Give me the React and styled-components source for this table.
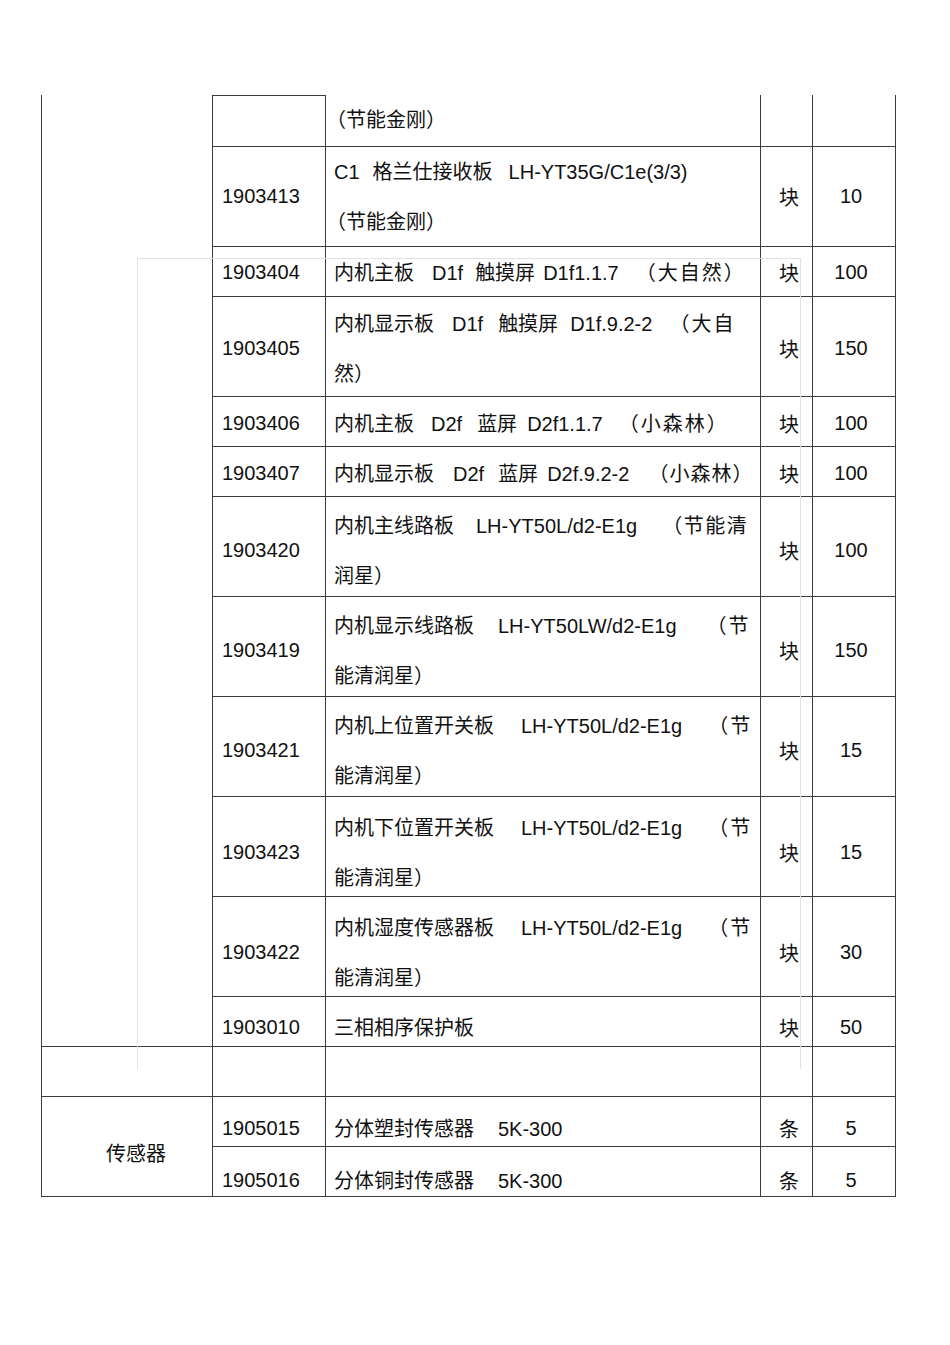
import React from 'react';
import styled, { createGlobalStyle } from 'styled-components';

const GlobalStyle = createGlobalStyle`
  html, body {
    margin: 0;
    padding: 0;
    background: #ffffff;
  }
  body {
    font-family: "Liberation Sans", "Noto Sans CJK SC", sans-serif;
    color: #111111;
  }
`;

const Page = styled.div`
  position: relative;
  width: 950px;
  height: 1345px;
  padding-top: 95px;
  box-sizing: border-box;
`;

const Sheet = styled.div`
  display: grid;
  grid-template-columns: 171px 113px 435px 52px 83px;
  grid-template-rows: 52px;
  grid-auto-rows: 50px;
  margin-left: 41px;
  width: 855px;
  border-left: 1px solid #3c3c3c;
  box-sizing: border-box;
`;

const Cell = styled.div`
  grid-column: ${({ $col }) => $col};
  grid-row: ${({ $row, $span }) => `${$row} / span ${$span || 1}`};
  border-right: 1px solid #3c3c3c;
  border-bottom: 1px solid #3c3c3c;
  border-top: ${({ $top }) => ($top ? '1px solid #3c3c3c' : 'none')};
  box-sizing: border-box;
  font-size: 20px;
  white-space: nowrap;
`;

const GroupCell = styled(Cell)`
  display: flex;
  align-items: center;
  justify-content: center;
  padding: 12px 0 0 18px;
`;

/* centred cells: padding-top of 2*shift moves the text down by shift */
const CodeCell = styled(Cell)`
  display: flex;
  align-items: center;
  padding: ${({ $shift = 0 }) => 2 * $shift}px 0 0 9px;
`;

const DescCell = styled(Cell)`
  padding: ${({ $shift = 0 }) => $shift}px 0 0 8px;
`;

const Line = styled.div`
  height: 50px;
  line-height: 50px;
`;

const Gap = styled.span`
  display: inline-block;
  width: ${({ $w }) => ($w > 0 ? $w : 0)}px;
  margin-left: ${({ $w }) => ($w < 0 ? $w : 0)}px;
`;

const Word = styled.span`
  letter-spacing: ${({ $ls }) => $ls || 0}px;
`;

const UnitCell = styled(Cell)`
  display: flex;
  align-items: center;
  justify-content: center;
  padding: ${({ $shift = 0 }) => 2 * $shift}px 0 0 5px;
`;

const QtyCell = styled(Cell)`
  display: flex;
  align-items: center;
  justify-content: center;
  padding: ${({ $shift = 0 }) => 2 * $shift}px 6px 0 0;
`;

const Watermark = styled.div`
  position: absolute;
  left: 137px;
  top: 258px;
  width: 662px;
  height: 810px;
  border: 1px solid #e2e2e2;
  border-bottom: none;
  pointer-events: none;
`;

const rows = [
  { code: '', lines: [[-8, '（节能金刚）']], unit: '', qty: '', top: true, shift: 0 },
  {
    code: '1903413',
    lines: [['C1', 13, '格兰仕接收板', 16, 'LH-YT35G/C1e(3/3)'], [-8, '（节能金刚）']],
    unit: '块',
    qty: '10',
    shift: 0,
  },
  {
    code: '1903404',
    lines: [['内机主板', 18, 'D1f', 12, '触摸屏', 8, 'D1f1.1.7', 17, { t: '（大自然）', ls: 2 }]],
    unit: '块',
    qty: '100',
    shift: 1,
  },
  {
    code: '1903405',
    lines: [['内机显示板', 18, 'D1f', 15, '触摸屏', 12, 'D1f.9.2-2', 17, { t: '（大自', ls: 2 }], ['然）']],
    unit: '块',
    qty: '150',
    shift: 2,
  },
  {
    code: '1903406',
    lines: [['内机主板', 17, 'D2f', 15, '蓝屏', 10, 'D2f1.1.7', 16, { t: '（小森林）', ls: 2 }]],
    unit: '块',
    qty: '100',
    shift: 2,
  },
  {
    code: '1903407',
    lines: [['内机显示板', 19, 'D2f', 14, '蓝屏', 9, 'D2f.9.2-2', 19, { t: '（小森林）', ls: 1 }]],
    unit: '块',
    qty: '100',
    shift: 2,
  },
  {
    code: '1903420',
    lines: [['内机主线路板', 22, 'LH-YT50L/d2-E1g', 25, { t: '（节能清', ls: 1.5 }], ['润星）']],
    unit: '块',
    qty: '100',
    shift: 4,
  },
  {
    code: '1903419',
    lines: [['内机显示线路板', 24, 'LH-YT50LW/d2-E1g', 30, { t: '（节', ls: 2 }], ['能清润星）']],
    unit: '块',
    qty: '150',
    shift: 4,
  },
  {
    code: '1903421',
    lines: [['内机上位置开关板', 27, 'LH-YT50L/d2-E1g', 26, { t: '（节', ls: 2 }], ['能清润星）']],
    unit: '块',
    qty: '15',
    shift: 4,
  },
  {
    code: '1903423',
    lines: [['内机下位置开关板', 27, 'LH-YT50L/d2-E1g', 26, { t: '（节', ls: 2 }], ['能清润星）']],
    unit: '块',
    qty: '15',
    shift: 6,
  },
  {
    code: '1903422',
    lines: [['内机湿度传感器板', 27, 'LH-YT50L/d2-E1g', 26, { t: '（节', ls: 2 }], ['能清润星）']],
    unit: '块',
    qty: '30',
    shift: 6,
  },
  { code: '1903010', lines: [['三相相序保护板']], unit: '块', qty: '50', shift: 6 },
  { code: '', lines: [], unit: '', qty: '', group: '', shift: 0 },
  { code: '1905015', lines: [['分体塑封传感器', 24, '5K-300']], unit: '条', qty: '5', group: '传感器', shift: 7 },
  { code: '1905016', lines: [['分体铜封传感器', 24, '5K-300']], unit: '条', qty: '5', shift: 9 },
];

const renderPart = (p, j) => {
  if (typeof p === 'number') return <Gap key={j} $w={p} />;
  if (typeof p === 'string') return <Word key={j}>{p}</Word>;
  return (
    <Word key={j} $ls={p.ls}>
      {p.t}
    </Word>
  );
};

const renderLine = (parts, i) => <Line key={i}>{parts.map(renderPart)}</Line>;

const InventorySheet = () => {
  let r = 1;
  const cells = [];

  rows.forEach((row, idx) => {
    const span = row.lines.length > 1 ? 2 : 1;

    if (idx === 0) {
      // the first group cell runs down to the 三相相序保护板 row
      cells.push(<GroupCell key="g0" $col={1} $row={1} $span={19} />);
    }
    if (row.group !== undefined) {
      cells.push(
        <GroupCell key={`g${idx}`} $col={1} $row={r} $span={row.group ? 2 : 1}>
          {row.group}
        </GroupCell>
      );
    }

    cells.push(
      <CodeCell key={`c${idx}`} $col={2} $row={r} $span={span} $top={row.top} $shift={row.shift}>
        {row.code}
      </CodeCell>,
      <DescCell key={`d${idx}`} $col={3} $row={r} $span={span} $shift={row.shift}>
        {row.lines.map(renderLine)}
      </DescCell>,
      <UnitCell key={`u${idx}`} $col={4} $row={r} $span={span} $shift={row.shift}>
        {row.unit}
      </UnitCell>,
      <QtyCell key={`q${idx}`} $col={5} $row={r} $span={span} $shift={row.shift}>
        {row.qty}
      </QtyCell>
    );
    r += span;
  });

  return <Sheet>{cells}</Sheet>;
};

const App = () => (
  <>
    <GlobalStyle />
    <Page>
      <InventorySheet />
      <Watermark />
    </Page>
  </>
);

export default App;
